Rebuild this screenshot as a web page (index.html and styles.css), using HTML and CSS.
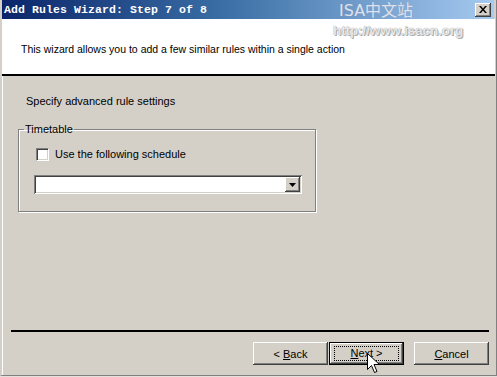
FILE: index.html
```html
<!DOCTYPE html>
<html lang="en">
<head>
    <meta charset="UTF-8">
    <title>Add Rules Wizard</title>
    <link rel="stylesheet" href="styles.css">
</head>
<body>

<div class="window">
    <div class="titlebar">
        <span class="title">Add Rules Wizard: Step 7 of 8</span>
        <button class="close">
            <svg width="8" height="7" viewBox="0 0 8 7"><path d="M0 0h2l2 2.5L6 0h2L5 3.5 8 7H6L4 4.5 2 7H0l3-3.5z" fill="#000"/></svg>
        </button>
    </div>

    <div class="header">
        <p>This wizard allows you to add a few similar rules within a single action</p>
    </div>

    <div class="content">
        <p class="intro">Specify advanced rule settings</p>

        <fieldset class="group">
            <legend>Timetable</legend>
            <label class="check">
                <span class="box"></span>
                Use the following schedule
            </label>
            <div class="combo">
                <span class="combo-text"></span>
                <span class="combo-btn">
                    <svg width="7" height="4" viewBox="0 0 7 4"><path d="M0 0h7L3.5 4z" fill="#000"/></svg>
                </span>
            </div>
        </fieldset>
    </div>

    <div class="footer">
        <div class="rule"></div>
        <div class="buttons">
            <button class="btn">&lt; <u>B</u>ack</button>
            <button class="btn default"><span class="focus"><u>N</u>ext &gt;</span></button>
            <button class="btn cancel"><u>C</u>ancel</button>
        </div>
    </div>

    <div class="watermark">
        <div class="wm-cn">ISA中文站</div>
        <div class="wm-url">http://www.isacn.org</div>
    </div>

    <svg class="cursor" width="13" height="21" viewBox="0 0 13 21">
        <path d="M0.5 0.5v16l4-4 3 7 2.5-1-3-7h5.5z" fill="#fff" stroke="#000" stroke-width="1"/>
    </svg>
</div>

</body>
</html>
```

FILE: styles.css
```css
body {
    margin: 0;
    background-color: #e4e1dc;
    font-family: "Liberation Sans", Arial, sans-serif;
    font-size: 11px;
    color: #000;
}
p {
    margin: 0;
}
.window {
    position: relative;
    width: 494px;
    height: 375px;
    background-color: #d4d0c8;
    border-left: 2px solid #d4d0c8;
    border-right: 1px solid #808080;
    border-bottom: 1px solid #808080;
    box-shadow: 1px 1px 0 #404040, inset 1px 0 0 #fff;
    display: flex;
    flex-direction: column;
    overflow: hidden;
}
.titlebar {
    height: 19px;
    margin-left: -2px;
    margin-right: 2px;
    padding: 0 4px;
    background: linear-gradient(to right, #0a246a, #3a6ea5 45%, #a6caf0);
    display: flex;
    align-items: center;
    justify-content: space-between;
}
.title {
    font-family: "Liberation Mono", monospace;
    font-weight: bold;
    font-size: 11.5px;
    color: #fff;
    letter-spacing: 0.1px;
}
.close {
    width: 16px;
    height: 14px;
    padding: 0;
    margin-right: -1px;
    border: none;
    background-color: #d4d0c8;
    box-shadow: inset -1px -1px #404040, inset 1px 1px #fff, inset -2px -2px #808080;
    display: flex;
    align-items: center;
    justify-content: center;
}
.header {
    height: 57px;
    margin-right: 1px;
    background-color: #fff;
    border-bottom: 2px solid #000;
    padding-left: 19px;
    padding-top: 24px;
    box-sizing: border-box;
    font-size: 10.5px;
}
.content {
    flex: 1;
    padding: 18px 0 0 16px;
}
.intro {
    padding-left: 8px;
    line-height: 14px;
}
.group {
    width: 298px;
    height: 89px;
    box-sizing: border-box;
    margin: 15px 0 0;
    padding: 0;
    border: 1px solid #808080;
    box-shadow: 1px 1px 0 #fff, inset 1px 1px 0 #fff;
}
.group legend {
    padding: 0 1px;
    margin-left: 5px;
    line-height: 12px;
}
.check {
    display: flex;
    align-items: center;
    gap: 6px;
    margin: 12px 0 0 17px;
    line-height: 14px;
}
.box {
    width: 13px;
    height: 13px;
    box-sizing: border-box;
    background-color: #fff;
    border-top: 1px solid #808080;
    border-left: 1px solid #808080;
    border-right: 1px solid #fff;
    border-bottom: 1px solid #fff;
    box-shadow: inset 1px 1px #404040, inset -1px -1px #d4d0c8;
}
.combo {
    display: flex;
    width: 268px;
    height: 19px;
    box-sizing: border-box;
    margin: 14px 0 0 15px;
    padding: 2px;
    background-color: #fff;
    box-shadow: inset 1px 1px #808080, inset -1px -1px #fff, inset 2px 2px #404040, inset -2px -2px #d4d0c8;
}
.combo-text {
    flex: 1;
}
.combo-btn {
    width: 15px;
    height: 15px;
    margin-left: auto;
    background-color: #d4d0c8;
    box-shadow: inset -1px -1px #404040, inset 1px 1px #fff, inset -2px -2px #808080;
    display: flex;
    align-items: center;
    justify-content: center;
}
.footer {
    height: 45px;
    padding: 0 7px 0 9px;
}
.rule {
    height: 2px;
    background-color: #000;
}
.buttons {
    display: flex;
    justify-content: flex-end;
    margin-top: 10px;
}
.btn {
    width: 75px;
    height: 23px;
    padding: 0;
    border: none;
    background-color: #d4d0c8;
    font-family: "Liberation Sans", Arial, sans-serif;
    font-size: 11px;
    color: #000;
    box-shadow: inset -1px -1px #404040, inset 1px 1px #fff, inset -2px -2px #808080;
}
.default {
    margin-left: 1px;
    border: 1px solid #000;
    display: flex;
    align-items: center;
    justify-content: center;
}
.focus {
    width: 63px;
    height: 13px;
    line-height: 13px;
    outline: 1px dotted #000;
}
.cancel {
    margin-left: 10px;
}
.watermark {
    position: absolute;
    left: 329px;
    top: 0;
    pointer-events: none;
}
.wm-cn {
    padding-left: 8px;
    font-size: 16px;
    line-height: 21px;
    font-family: "DejaVu Sans", "Noto Sans CJK SC", sans-serif;
    color: rgba(235, 240, 250, 0.85);
    text-shadow: 0 0 1px #8a97b0;
}
.wm-url {
    padding-left: 2px;
    font-family: "Liberation Sans", Arial, sans-serif;
    font-weight: bold;
    font-size: 13.5px;
    line-height: 20px;
    letter-spacing: -0.1px;
    color: #e8e8e8;
    text-shadow: 0 0 1px #8c8c8c, 1px 1px 0 #b0b0b0;
}
.cursor {
    position: absolute;
    left: 365px;
    top: 353px;
}
```
